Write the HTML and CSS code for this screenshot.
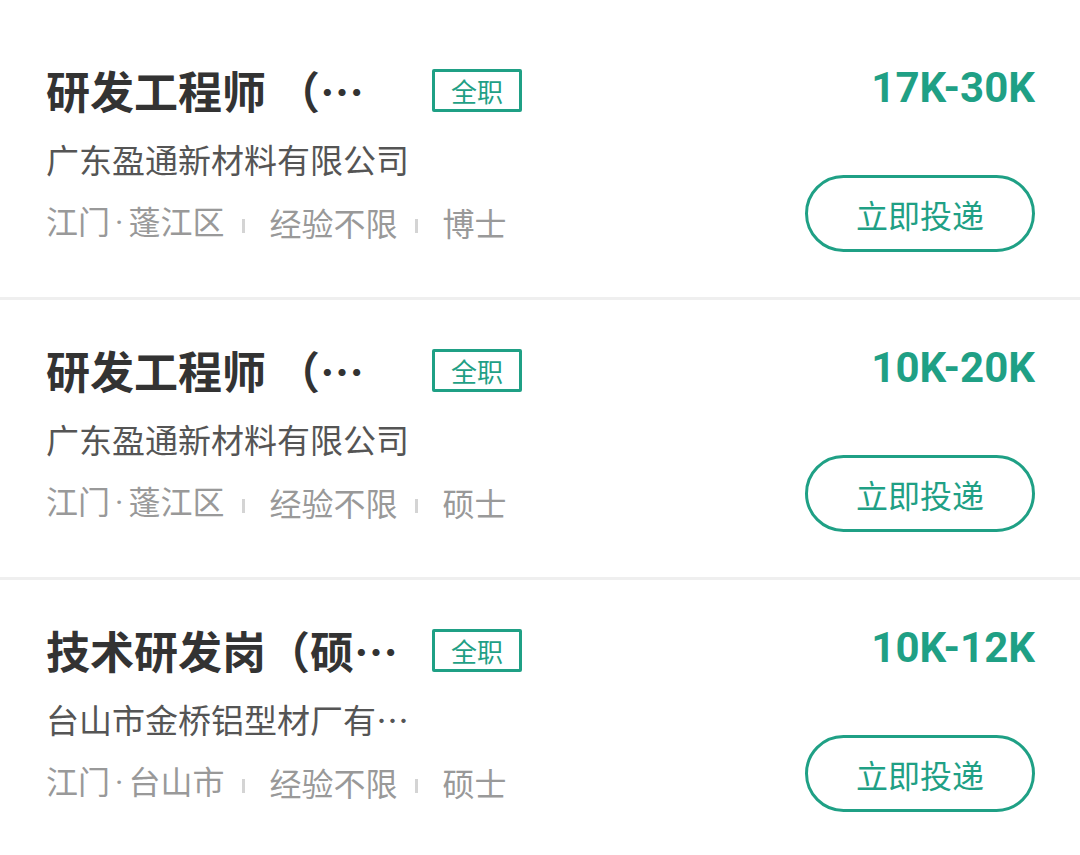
FILE: index.html
```html
<!DOCTYPE html>
<html lang="zh-CN">
<head>
    <meta charset="UTF-8">
    <meta name="viewport" content="width=device-width, initial-scale=1.0">
    <title>职位列表</title>
    <link rel="stylesheet" href="styles.css">
</head>
<body>

<!-- 职位列表 -->
<div class="job-list">

    <div class="job-card">
        <div class="job-info">
            <div class="job-head">
                <span class="job-title">研发工程师 （…</span>
                <span class="job-tag">全职</span>
            </div>
            <div class="job-company">广东盈通新材料有限公司</div>
            <div class="job-meta">
                <span>江门<b class="dot">·</b>蓬江区</span>
                <i class="sep"></i>
                <span>经验不限</span>
                <i class="sep"></i>
                <span>博士</span>
            </div>
        </div>
        <div class="job-side">
            <div class="job-salary">17K-30K</div>
            <button class="apply-btn">立即投递</button>
        </div>
    </div>

    <div class="job-card">
        <div class="job-info">
            <div class="job-head">
                <span class="job-title">研发工程师 （…</span>
                <span class="job-tag">全职</span>
            </div>
            <div class="job-company">广东盈通新材料有限公司</div>
            <div class="job-meta">
                <span>江门<b class="dot">·</b>蓬江区</span>
                <i class="sep"></i>
                <span>经验不限</span>
                <i class="sep"></i>
                <span>硕士</span>
            </div>
        </div>
        <div class="job-side">
            <div class="job-salary">10K-20K</div>
            <button class="apply-btn">立即投递</button>
        </div>
    </div>

    <div class="job-card">
        <div class="job-info">
            <div class="job-head">
                <span class="job-title">技术研发岗（硕…</span>
                <span class="job-tag">全职</span>
            </div>
            <div class="job-company">台山市金桥铝型材厂有…</div>
            <div class="job-meta">
                <span>江门<b class="dot">·</b>台山市</span>
                <i class="sep"></i>
                <span>经验不限</span>
                <i class="sep"></i>
                <span>硕士</span>
            </div>
        </div>
        <div class="job-side">
            <div class="job-salary">10K-12K</div>
            <button class="apply-btn">立即投递</button>
        </div>
    </div>

</div>

</body>
</html>
```

FILE: styles.css
```css
body {
    font-family: "Noto Sans CJK SC", "Noto Sans", sans-serif;
    background-color: #fff;
    color: #333;
    margin: 0;
    padding: 0;
}

.job-list {
    margin-top: 20px;
}

.job-card {
    box-sizing: border-box;
    height: 280px;
    padding: 48px 45px 0 46px;
    display: flex;
    justify-content: space-between;
    border-bottom: 3px solid #efefef;
}

.job-head {
    display: flex;
    align-items: center;
    height: 44px;
}

.job-title {
    width: 360px;
    font-size: 44px;
    line-height: 56px;
    font-weight: bold;
    color: #333;
    white-space: nowrap;
}

.job-tag {
    margin-left: 26px;
    padding: 0 16px;
    border: 3px solid #1fa085;
    border-radius: 2px;
    font-size: 26px;
    line-height: 37px;
    color: #1fa085;
}

.job-company {
    margin-top: 25px;
    font-size: 33px;
    line-height: 44px;
    color: #555;
}

.job-meta {
    margin-top: 17px;
    display: flex;
    align-items: center;
    font-size: 32px;
    line-height: 44px;
    color: #999;
}

.job-meta .dot {
    font-family: Roboto, "Liberation Sans", sans-serif;
    font-weight: normal;
    margin: 0 5px;
}

.job-meta .sep {
    display: inline-block;
    width: 3px;
    height: 14px;
    margin: 8px 24px 0 18px;
    background-color: #d4d4d4;
}

.job-side {
    display: flex;
    flex-direction: column;
    align-items: flex-end;
}

.job-salary {
    font-family: Roboto, "Liberation Sans", sans-serif;
    font-size: 42px;
    line-height: 40px;
    font-weight: bold;
    color: #1fa085;
}

.apply-btn {
    margin-top: 67px;
    width: 230px;
    height: 77px;
    border: 3px solid #1fa085;
    border-radius: 39px;
    background-color: #fff;
    font-family: "Noto Sans CJK SC", sans-serif;
    font-size: 32px;
    color: #1fa085;
    padding: 0;
}
```
